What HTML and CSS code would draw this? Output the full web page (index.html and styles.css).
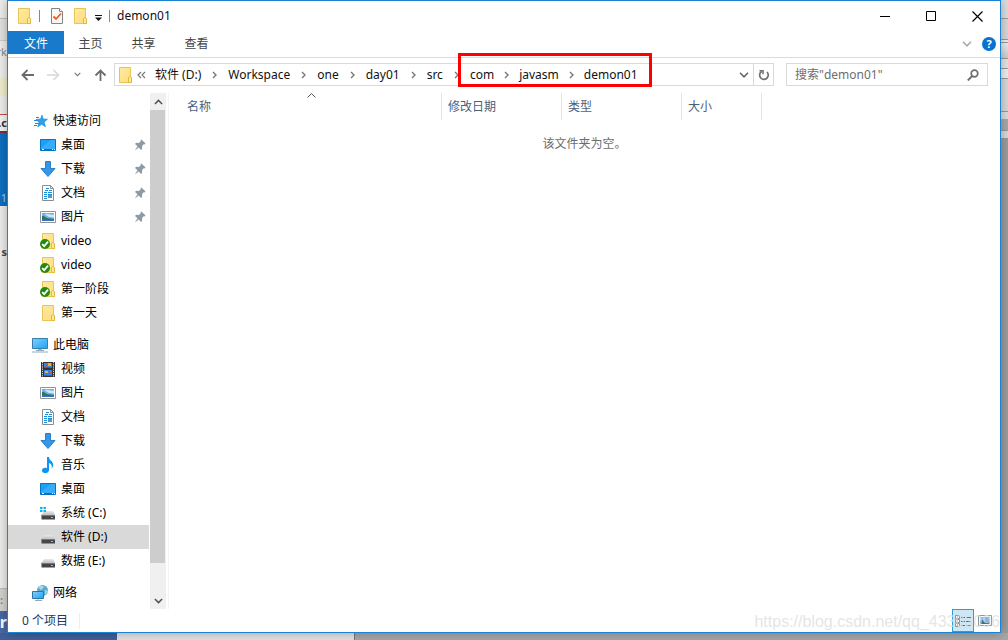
FILE: index.html
```
<!DOCTYPE html>
<html lang="zh-CN">
<head>
<meta charset="utf-8">
<title>demon01</title>
<link rel="stylesheet" href="styles.css">
</head>
<body>
<svg class="defs" aria-hidden="true">
  <defs>
    <linearGradient id="gFolder" x1="0" y1="0" x2="1" y2="1"><stop offset="0" stop-color="#ffeaa0"/><stop offset="1" stop-color="#fddc7c"/></linearGradient>
    <linearGradient id="gBlue" x1="0" y1="0" x2="1" y2="1"><stop offset="0" stop-color="#7fd0fb"/><stop offset="1" stop-color="#1ea2f5"/></linearGradient>
    <linearGradient id="gDrive" x1="0" y1="0" x2="0" y2="1"><stop offset="0" stop-color="#e8e8ea"/><stop offset="1" stop-color="#bfc0c4"/></linearGradient>
  </defs>
  <symbol id="folder" viewBox="0 0 16 16"><path d="M2.5.5h11v9.500l1 1v4.500h-12z" fill="url(#gFolder)" stroke="#e8c458"/><path d="M11.500 15.500v-5l1.500-1 1.500 1v5z" fill="#ffe9a0" stroke="#e3b83f"/></symbol>
  <symbol id="synced" viewBox="0 0 16 16"><use href="#folder"/><circle cx="5" cy="11" r="5" fill="#258a0b"/><path d="M2.200 11.200l2 2L8 8.600" fill="none" stroke="#fff" stroke-width="1.800"/></symbol>
  <symbol id="star" viewBox="0 0 16 16"><path d="M10 2l1.200 4 4.300.2-3.400 2.800 1.400 4.800-3.900-2.500-3.900 2.700 1.400-4.700L4 6.500l4.600-.5z" fill="#2aa0ee" stroke="#1584d3" stroke-width=".6"/><path d="M4 4.500h3M2 7.500h4M3 10.500h4M2 12.500h3" stroke="#1c8edb"/></symbol>
  <symbol id="desktop" viewBox="0 0 16 16"><path d="M.5 2.500h15v11H.5z" fill="#1ba1fa" stroke="#0873bd"/><path d="M1 11L11 3h4v9H1z" fill="#35adfb"/><path d="M1 12.500h14" stroke="#0873bd"/><path d="M2 12.500h2m8 0h1m1 0h1" stroke="#fff"/></symbol>
  <symbol id="down" viewBox="0 0 16 16"><path d="M5.500.5h5v7h4.500L8 15.500 1 7.500h4.500z" fill="#3595e6" stroke="#287fcb"/></symbol>
  <symbol id="doc" viewBox="0 0 16 16"><path d="M2.500.5h8l3 3v12h-11z" fill="#fff" stroke="#8c8c8c"/><path d="M10.500.5v3h3" fill="none" stroke="#8c8c8c"/><path d="M6 3.500h3M5 5.500h3m1 0h3M4 7.500h3m1 0h4M4 9.500h3m1 0h4M4 11.500h3M4 13.500h3" stroke="#1991df"/><path d="M8 10h4v3H8z" fill="#4c9ec7"/></symbol>
  <symbol id="picture" viewBox="0 0 16 16"><path d="M.5 2.500h15v11H.5z" fill="#fff" stroke="#8f969b"/><path d="M2 4h12v8H2z" fill="#68b4ef"/><path d="M5 5.500c2-2 5 1 9 0v3L9 8z" fill="#cbe8fa"/><path d="M2 7c3 0 3 1 5 2l7 1v2H2z" fill="#3d6e6d"/><path d="M2 11h12v1H2z" fill="#3c74b0"/></symbol>
  <symbol id="pc" viewBox="0 0 16 16"><path d="M.5 1.500h15v10H.5z" fill="url(#gBlue)" stroke="#377fa9"/><path d="M6 12h4v1H6z" fill="#a2b6c4"/><path d="M4 13.500h8M0 15h16" stroke="#8eaabd"/></symbol>
  <symbol id="film" viewBox="0 0 16 16"><path d="M1 1h14v15H1z" fill="#333"/><path d="M2.500 1v15M13.500 1v15" stroke="#ddd" stroke-dasharray="1.200 1"/><path d="M4 2h8v5H4zM4 9h8v6H4z" fill="#3885e0"/><path d="M5 4h3v2H5zM9 11h2v2H9z" fill="#e34b2d"/><path d="M8 2h3v3H8zM5 10h3v2H5z" fill="#eab52e"/><path d="M4 6h8v1H4zM4 14h8v1H4z" fill="#3c7c38"/></symbol>
  <symbol id="music" viewBox="0 0 16 16"><path d="M7 0h2c0 4 5 4 4 9-.4 1.500-1 2-1.500 2.500C12.300 8 11 7 9 6v7c0 4-7 4-7 .5C2 11 5 10.300 7 11.300z" fill="#0895f5"/></symbol>
  <symbol id="drive" viewBox="0 0 16 16"><path d="M4 6h9l2 4h-13.500z" fill="url(#gDrive)"/><path d="M1.500 10h13.500v4.500h-13.500z" fill="#45464a"/><path d="M1.500 10.500h13.500" stroke="#77787c"/><path d="M11 12h2v1h-2z" fill="#50ee50"/></symbol>
  <symbol id="system" viewBox="0 0 16 16"><use href="#drive"/><path d="M0 2h2.500v2H0zM3.500 2h2.500v2H3.500zM0 5h2.500v2H0zM3.500 5h2.500v2H3.500z" fill="#12b2ed"/></symbol>
  <symbol id="network" viewBox="0 0 16 16"><circle cx="10.500" cy="5.500" r="5.500" fill="#5ba9cc"/><path d="M6 2c3-2 5-1 6 0L9 5zm7 3l3 1-3 4z" fill="#a8d8e5"/><path d="M.5 6.500h11v7H.5z" fill="url(#gBlue)" stroke="#30779f"/><path d="M3 15.500h7M6 14v1" stroke="#8eaabd"/></symbol>
  <symbol id="pin" viewBox="0 0 12 12"><path d="M7.500.5l4 4-1 1-1-.2-1.500 2 .2 2.500-1.200 1.200L4.800 8.600.8 11.500 3.500 7.300 1 5l1.200-1.200 2.500.2 2-1.600-.2-1z" fill="#8b9aa5"/></symbol>
  <symbol id="chev" viewBox="0 0 5 8"><path d="M1 1l3 3-3 3" fill="none" stroke="#777" stroke-width="1.400"/></symbol>
  <symbol id="chevdown" viewBox="0 0 10 6"><path d="M1 .8l4 4 4-4" fill="none" stroke="currentColor" stroke-width="1.600"/></symbol>
</svg>

<div class="screen">
  <div class="behind behind-left" aria-hidden="true">
    <div class="l1"></div><div class="l2"></div><div class="l3">rk</div><div class="l4"></div><div class="l5"></div><div class="l6">.c</div><div class="l7">1</div><div class="l8">s</div><div class="l9">:</div><div class="l10">r</div>
  </div>

  <main class="window">
    <header class="titlebar">
      <svg class="i16"><use href="#folder"/></svg>
      <span class="bar"></span>
      <button class="bare" aria-label="属性"><svg class="i16" viewBox="0 0 16 16"><path d="M2.500.5h8l3 3v12h-11z" fill="#f7f7f7" stroke="#858585"/><path d="M10.500.5v3h3" fill="#fff" stroke="#858585"/><path d="M4.500 8.500l2.500 2.500 5-5.500" fill="none" stroke="#ef5b21" stroke-width="1.800"/></svg></button>
      <button class="bare" aria-label="新建文件夹"><svg class="i16"><use href="#folder"/></svg></button>
      <button class="bare" aria-label="自定义快速访问工具栏"><svg class="quick" viewBox="0 0 7 6"><path d="M0 .5h7" stroke="#111"/><path d="M0 2.500h7L3.500 6z" fill="#111"/></svg></button>
      <span class="bar"></span>
      <h1 class="title">demon01</h1>
      <div class="controls">
        <button class="ctl" aria-label="最小化"><svg viewBox="0 0 11 11"><path d="M0 5.500h10" stroke="#000"/></svg></button>
        <button class="ctl" aria-label="最大化"><svg viewBox="0 0 11 11"><path d="M.5.5h9v9h-9z" fill="none" stroke="#000"/></svg></button>
        <button class="ctl" aria-label="关闭"><svg viewBox="0 0 11 11"><path d="M.5.5l10 10M10.500.5l-10 10" stroke="#000" stroke-width="1.200"/></svg></button>
      </div>
    </header>

    <nav class="ribbon">
      <button class="tab file">文件</button>
      <button class="tab">主页</button>
      <button class="tab">共享</button>
      <button class="tab">查看</button>
      <div class="ribbon-end">
        <button class="bare expand" aria-label="展开功能区"><svg class="down10"><use href="#chevdown"/></svg></button>
        <button class="help" aria-label="帮助">?</button>
      </div>
    </nav>

    <div class="address-row">
      <div class="arrows">
        <button class="bare" aria-label="后退"><svg class="arrow" viewBox="0 0 13 12"><path d="M13 6H1.500M6.500 1l-5 5 5 5" fill="none" stroke="#6b6b6b" stroke-width="1.800"/></svg></button>
        <button class="bare" aria-label="前进"><svg class="arrow" viewBox="0 0 13 12"><path d="M0 6h11.500M6.500 1l5 5-5 5" fill="none" stroke="#d8d8d8" stroke-width="1.600"/></svg></button>
        <button class="bare" aria-label="最近浏览的位置"><svg class="recent"><use href="#chevdown"/></svg></button>
        <button class="bare" aria-label="上移"><svg class="arrow" viewBox="0 0 13 12"><path d="M6.500 12V1.500M1.500 6.500l5-5 5 5" fill="none" stroke="#6b6b6b" stroke-width="1.800"/></svg></button>
      </div>
      <div class="address">
        <svg class="i16"><use href="#folder"/></svg>
        <div class="crumbs">
          <svg class="more" viewBox="0 0 9 8"><path d="M4 1L1 4l3 3M8 1L5 4l3 3" fill="none" stroke="#777" stroke-width="1.200"/></svg>
          <a href="#">软件 (D:)</a><svg class="chev"><use href="#chev"/></svg>
          <a href="#">Workspace</a><svg class="chev"><use href="#chev"/></svg>
          <a href="#">one</a><svg class="chev"><use href="#chev"/></svg>
          <a href="#">day01</a><svg class="chev"><use href="#chev"/></svg>
          <a href="#">src</a><svg class="chev"><use href="#chev"/></svg>
          <div class="marked"><a href="#">com</a><svg class="chev"><use href="#chev"/></svg>
          <a href="#">javasm</a><svg class="chev"><use href="#chev"/></svg>
          <a href="#">demon01</a></div>
        </div>
        <button class="bare history" aria-label="以前的位置"><svg class="down10"><use href="#chevdown"/></svg></button>
        <button class="refresh" aria-label="刷新"><svg viewBox="0 0 12 12"><path d="M3.500 2.500A4.300 4.300 0 1 0 9 3" fill="none" stroke="#6f6f6f" stroke-width="1.700"/><path d="M1.500 1.800H5v3.500" fill="none" stroke="#6f6f6f" stroke-width="1.500"/></svg></button>
      </div>
      <label class="search">
        <input type="text" placeholder='搜索"demon01"' aria-label="搜索">
        <svg viewBox="0 0 12 12"><circle cx="7.500" cy="4.500" r="3.300" fill="none" stroke="#6f6f6f" stroke-width="1.700"/><path d="M5.200 7L.8 11.400" stroke="#6f6f6f" stroke-width="2"/></svg>
      </label>
    </div>

    <div class="body">
      <aside class="side">
        <nav class="tree">
          <section>
            <a class="root" href="#"><svg class="i16"><use href="#star"/></svg>快速访问</a>
            <a href="#"><svg class="i16"><use href="#desktop"/></svg>桌面<svg class="pin"><use href="#pin"/></svg></a>
            <a href="#"><svg class="i16"><use href="#down"/></svg>下载<svg class="pin"><use href="#pin"/></svg></a>
            <a href="#"><svg class="i16"><use href="#doc"/></svg>文档<svg class="pin"><use href="#pin"/></svg></a>
            <a href="#"><svg class="i16"><use href="#picture"/></svg>图片<svg class="pin"><use href="#pin"/></svg></a>
            <a href="#"><svg class="i16"><use href="#synced"/></svg>video</a>
            <a href="#"><svg class="i16"><use href="#synced"/></svg>video</a>
            <a href="#"><svg class="i16"><use href="#synced"/></svg>第一阶段</a>
            <a href="#"><svg class="i16"><use href="#folder"/></svg>第一天</a>
          </section>
          <section>
            <a class="root" href="#"><svg class="i16"><use href="#pc"/></svg>此电脑</a>
            <a href="#"><svg class="i16"><use href="#film"/></svg>视频</a>
            <a href="#"><svg class="i16"><use href="#picture"/></svg>图片</a>
            <a href="#"><svg class="i16"><use href="#doc"/></svg>文档</a>
            <a href="#"><svg class="i16"><use href="#down"/></svg>下载</a>
            <a href="#"><svg class="i16"><use href="#music"/></svg>音乐</a>
            <a href="#"><svg class="i16"><use href="#desktop"/></svg>桌面</a>
            <a href="#"><svg class="i16"><use href="#system"/></svg>系统 (C:)</a>
            <a class="selected" href="#"><svg class="i16"><use href="#drive"/></svg>软件 (D:)</a>
            <a href="#"><svg class="i16"><use href="#drive"/></svg>数据 (E:)</a>
          </section>
          <section>
            <a class="root" href="#"><svg class="i16"><use href="#network"/></svg>网络</a>
          </section>
        </nav>
        <div class="scroll">
          <button class="bare" aria-label="向上滚动"><svg class="scroll-up"><use href="#chevdown"/></svg></button>
          <div class="thumb"></div>
          <button class="bare" aria-label="向下滚动"><svg class="scroll-down"><use href="#chevdown"/></svg></button>
        </div>
      </aside>
      <div class="files">
        <table>
          <colgroup><col class="c-name"><col class="c-date"><col class="c-type"><col class="c-size"><col></colgroup>
          <thead><tr><th class="name">名称<svg class="sort" viewBox="0 0 9 5"><path d="M.5 4.500l4-4 4 4" fill="none" stroke="#555"/></svg></th><th>修改日期</th><th>类型</th><th>大小</th><td></td></tr></thead>
          <tbody><tr><td class="empty" colspan="5">该文件夹为空。</td></tr></tbody>
        </table>
      </div>
    </div>

    <footer class="status">
      <span class="count">0 个项目</span>
      <div class="views">
        <button class="view active" aria-label="详细信息"><svg viewBox="0 0 16 12"><path d="M.5.5h4v3h-4zM.5 4.500h4v3h-4zM.5 8.500h4v3h-4z" fill="#fff" stroke="#8a9298"/><path d="M2 2h1" stroke="#3377cc"/><path d="M2 6h1" stroke="#3377cc"/><path d="M2 10h1" stroke="#e02020" stroke-width="2"/><path d="M6 2.500h4m1 0h5M6 6.500h4m1 0h5M6 10.500h4m1 0h5" stroke="#667"/></svg></button>
        <button class="view" aria-label="大缩略图"><svg viewBox="0 0 14 12"><path d="M.5.500h13v10H.5z" fill="#fff" stroke="#8f969b"/><path d="M2 2h10v7H2z" fill="#7cb7ee"/><path d="M2 6l3-1 3 2 4-1v3H2z" fill="#3c6f80"/></svg></button>
      </div>
    </footer>
  </main>

  <div class="behind behind-right" aria-hidden="true">
    <div class="r1"></div><div class="r2"></div><div class="r3"></div><div class="r4"></div><div class="r5"></div><div class="r6"></div><div class="r7"></div><div class="r8"></div><div class="r9"></div>
  </div>
  <div class="behind-bottom" aria-hidden="true"><div class="b1"></div><div class="b2"></div><div class="b3"></div></div>
  <div class="watermark">https://blog.csdn.net/qq_43303096</div>
</div>
</body>
</html>
```
FILE: styles.css
```
* { box-sizing: border-box; }
body { margin: 0; font: 12px/16px "Noto Sans", "Noto Sans CJK SC", sans-serif; color: #111; }
a { color: inherit; text-decoration: none; }
button { font: inherit; color: inherit; cursor: pointer; }
svg { display: block; flex: none; }
.defs { position: absolute; width: 0; height: 0; }
.bare { display: flex; padding: 0; border: 0; background: none; }
.i16 { width: 16px; height: 16px; }

.screen { position: relative; display: grid; grid-template: minmax(0, 1fr) 7px / 7px minmax(0, 1fr) 7px; min-height: 100vh; overflow: hidden; background: #9c9c9c; }
.window { display: flex; flex-direction: column; border: 1px solid #1a83d6; background: #fff; box-shadow: 0 0 10px rgba(0, 0, 0, .3); z-index: 1; }

/* windows showing behind */
.behind { display: flex; flex-direction: column; overflow: hidden; }
.behind-left > div { display: flex; justify-content: flex-end; align-items: center; flex: none; white-space: nowrap; font-weight: 700; font-size: 11px; }
.behind-left .l1 { height: 19px; background: #ededeb; border-bottom: 1px solid #bdbdbd; }
.behind-left .l2 { height: 22px; background: #e2e2e0; border-bottom: 1px solid #ccc; }
.behind-left .l3 { height: 37px; padding-bottom: 16px; background: #eeeeec; color: #888; font-weight: 400; }
.behind-left .l4 { height: 18px; background: #f0edce; }
.behind-left .l5 { height: 18px; background: #eeeeec; }
.behind-left .l6 { height: 19px; background: #f4f4f4; border-top: 1px solid #c0504d; border-bottom: 2px solid #7c2f42; color: #333; }
.behind-left .l7 { height: 73px; padding-top: 56px; background: #0d6fc0; color: #9fd0f5; font-weight: 400; }
.behind-left .l8 { flex: 1; align-items: flex-start; padding-top: 38px; background: #ededeb; color: #444; }
.behind-left .l9 { height: 23px; background: #d2d2d0; border-top: 1px solid #bbb; color: #888; justify-content: flex-start; }
.behind-left .l10 { height: 22px; background: #4868a4; color: #fff; font-size: 16px; }
.behind-right { background: #9c9c9c; }
.behind-right > div { flex: none; border-bottom: 1px solid #999; }
.r1 { height: 19px; background: #dedede; }
.r2 { height: 21px; background: #d8d8d8; }
.r3 { height: 3px; background: #eee; }
.r4 { height: 16px; background: linear-gradient(#eee, #ccc); }
.r5 { height: 10px; background: #e4e4e4; }
.r6 { height: 10px; background: #eee; }
.r7 { height: 33px; background: #d8d8d8; }
.r8 { height: 19px; background: linear-gradient(#ddd 7px, #a8a8a8 7px); }
.r9 { height: 8px; background: #d8d8d8; }
.behind-bottom { grid-column: 1 / -1; display: flex; }
.b1 { width: 117px; background: #40609a; }
.b2 { width: 238px; background: #e2e2e2; border-right: 1px solid #777; }
.b3 { flex: 1; background: #a6a6a6; }

/* title bar */
.titlebar { display: flex; align-items: center; height: 30px; padding-left: 8px; }
.bar { width: 1px; height: 12px; background: #888; margin: 0 9px 0 7px; }
.titlebar .bare + .bare { margin-left: 7px; }
.titlebar .bare + .bar { margin-right: 7px; }
.quick { width: 7px; height: 6px; margin-top: 3px; }
.title { margin: 0; font-size: 12px; font-weight: 400; }
.controls { display: flex; align-self: stretch; margin-left: auto; }
.ctl { display: grid; place-items: center; width: 46px; padding: 0; border: 0; background: none; }
.ctl svg { width: 11px; height: 11px; }

/* ribbon */
.ribbon { display: flex; height: 27px; padding-bottom: 3px; border-bottom: 1px solid #dadbdc; }
.tab { width: 53px; padding: 3px 0 0; border: 0; background: none; color: #444; }
.tab.file { width: 56px; background: #1979ca; color: #fff; }
.ribbon-end { display: flex; align-items: center; gap: 10px; margin: 3px 4px 0 auto; color: #aaa; }
.down10 { width: 10px; height: 6px; }
.help { width: 14px; height: 14px; padding: 0; border: 0; border-radius: 50%; background: #0872d0; color: #fff; font-size: 11px; font-weight: 700; line-height: 14px; }

/* address row */
.address-row { display: flex; align-items: center; height: 35px; padding: 0 12px 2px 13px; }
.arrows { display: flex; align-items: center; justify-content: space-between; width: 86px; margin-right: 7px; color: #777; }
.arrow { width: 13px; height: 12px; }
.recent { width: 7px; height: 5px; }
.address { display: flex; align-items: center; flex: 1; height: 23px; padding-left: 2px; border: 1px solid #d9d9d9; }
.crumbs, .marked { display: flex; align-items: center; gap: 10px; white-space: nowrap; }
.crumbs { gap: 11px; margin-left: 4px; }
.more { margin-right: -2px; }
.chev { width: 5px; height: 8px; }
.more { width: 9px; height: 8px; }
.marked { position: relative; }
.marked::after { content: ""; position: absolute; inset: -14px -14px -4px -12px; border: 3px solid #fe0000; pointer-events: none; }
.history { margin-left: auto; margin-right: 4px; color: #666; }
.refresh { display: grid; place-items: center; align-self: stretch; width: 20px; padding: 0; border: 0; border-left: 1px solid #d9d9d9; background: none; }
.refresh svg, .search svg { width: 12px; height: 12px; }
.search { display: flex; align-items: center; width: 202px; height: 23px; margin-left: 12px; padding: 0 8px; border: 1px solid #d9d9d9; }
.search input { flex: 1; min-width: 0; padding: 0; border: 0; outline: 0; font: inherit; background: none; }
.search input::placeholder { color: #6d6d6d; opacity: 1; }

/* navigation pane */
.body { display: flex; flex: 1; }
.side { display: flex; width: 161px; border-right: 1px solid #f3f3f3; }
.tree { width: 141px; margin-right: 1px; padding-top: 16px; }
.tree section { margin-bottom: 8px; }
.tree section:last-child { margin-bottom: 0; }
.tree a { display: flex; align-items: center; gap: 5px; height: 24px; padding: 0 3px 0 32px; color: #000; }
.tree a.root { padding-left: 24px; }
.tree a.selected { background: #d9d9d9; }
.pin { width: 12px; height: 12px; margin-left: auto; }
.scroll { display: flex; flex-direction: column; width: 16px; background: #f0f0f0; color: #505050; }
.scroll .bare { justify-content: center; align-items: center; height: 17px; }
.thumb { flex: 1; width: 15px; margin-bottom: 29px; background: #cdcdcd; }
.scroll-up, .scroll-down { width: 9px; height: 6px; }
.scroll-up { transform: rotate(180deg); }

/* file list */
.files { flex: 1; min-width: 0; }
table { width: 100%; table-layout: fixed; border-collapse: separate; border-spacing: 0; }
.c-name { width: 273px; }
.c-date, .c-type { width: 120px; }
.c-size { width: 80px; }
th { position: relative; height: 27px; padding: 0 0 0 6px; border-right: 1px solid #e5e5e5; color: #4c607a; font-weight: 400; text-align: left; }
th.name { padding-left: 18px; }
.sort { position: absolute; top: 0; left: calc(50% + 2px); width: 9px; height: 5px; }
td { padding: 0; }
td.empty { padding: 16px 0; color: #6d6d6d; text-align: center; }

/* status bar */
.status { display: flex; align-items: stretch; justify-content: space-between; height: 23px; padding-right: 4px; color: #22375a; }
.count { align-self: center; padding: 0 11px 0 14px; border-right: 1px solid #eee; }
.views { display: flex; }
.view { display: grid; place-items: center; width: 22px; padding: 0; border: 0; background: none; }
.view svg { width: 16px; height: 12px; }
.view.active { border: 1px solid #26a0da; background: #cce8f6; }

.watermark { position: absolute; right: 8px; bottom: 9px; z-index: 2; color: rgba(222, 222, 222, .8); font: 16px/18px "Liberation Sans", sans-serif; pointer-events: none; }
```
